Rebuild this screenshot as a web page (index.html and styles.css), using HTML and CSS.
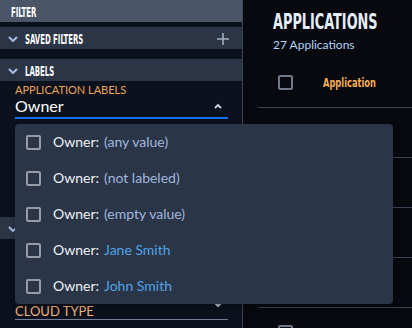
FILE: index.html
```html
<!DOCTYPE html>
<html lang="en">
<head>
  <meta charset="UTF-8" />
  <meta name="viewport" content="width=device-width, initial-scale=1.0" />
  <title>Applications</title>
  <link rel="stylesheet" href="styles.css">
</head>
<body>
  <aside class="sidebar">
    <div class="sidebar-title"><span class="narrow">FILTER</span></div>

    <div class="section section-saved">
      <div class="section-head">
        <svg class="chevron" width="10" height="6" viewBox="0 0 10 6"><path d="M1 1 L5 5 L9 1" /></svg>
        <span class="narrow">SAVED FILTERS</span>
        <svg class="section-add" width="12" height="12" viewBox="0 0 12 12"><path d="M6 0 V12 M0 6 H12" /></svg>
      </div>
    </div>

    <div class="section section-labels">
      <div class="section-head">
        <svg class="chevron" width="10" height="6" viewBox="0 0 10 6"><path d="M1 1 L5 5 L9 1" /></svg>
        <span class="narrow">LABELS</span>
      </div>
      <div class="section-body">
        <div class="field">
          <div class="field-label">APPLICATION LABELS</div>
          <div class="field-input is-open">
            <span>Owner</span>
            <svg class="caret" width="8" height="6" viewBox="0 0 8 6"><path d="M1 5 L4 2 L7 5" /></svg>

            <ul class="menu">
              <li class="menu-item"><span class="checkbox"></span><span class="menu-key">Owner:</span><span class="menu-value">(any value)</span></li>
              <li class="menu-item"><span class="checkbox"></span><span class="menu-key">Owner:</span><span class="menu-value">(not labeled)</span></li>
              <li class="menu-item"><span class="checkbox"></span><span class="menu-key">Owner:</span><span class="menu-value">(empty value)</span></li>
              <li class="menu-item"><span class="checkbox"></span><span class="menu-key">Owner:</span><span class="menu-value is-name">Jane Smith</span></li>
              <li class="menu-item"><span class="checkbox"></span><span class="menu-key">Owner:</span><span class="menu-value is-name">John Smith</span></li>
            </ul>
          </div>
        </div>
      </div>
    </div>

    <div class="section section-attributes">
      <div class="section-head">
        <svg class="chevron" width="10" height="6" viewBox="0 0 10 6"><path d="M1 1 L5 5 L9 1" /></svg>
        <span class="narrow">ATTRIBUTES</span>
      </div>
      <div class="section-body">
        <div class="field">
          <div class="field-input is-placeholder">
            <span>CLOUD TYPE</span>
            <svg class="caret" width="8" height="6" viewBox="0 0 8 6"><path d="M1 1 L4 4 L7 1" /></svg>
          </div>
        </div>
      </div>
    </div>
  </aside>

  <main class="main">
    <div class="page-head">
      <h1><span class="narrow-title">APPLICATIONS</span></h1>
      <div class="page-count">27 Applications</div>
    </div>

    <div class="table">
      <div class="row row-head">
        <span class="checkbox"></span>
        <span class="cell narrow-head">Application</span>
      </div>
      <div class="row"><span class="checkbox"></span><span class="cell">billing</span></div>
      <div class="row"><span class="checkbox"></span><span class="cell">checkout</span></div>
      <div class="row"><span class="checkbox"></span><span class="cell">inventory</span></div>
      <div class="row"><span class="checkbox"></span><span class="cell">search</span></div>
      <div class="row"><span class="checkbox"></span><span class="cell">mlflow</span></div>
    </div>
  </main>
</body>
</html>
```

FILE: styles.css
```css
:root {
  --sidebar-bg: #0b111d;
  --main-bg: #07090e;
  --title-bg: #4a5568;
  --head-bg: #2c3546;
  --menu-bg: #2b3548;
  --line: #3a4253;
  --orange: #eca458;
  --blue: #1a6ff0;
  --narrow: "DejaVu Sans Condensed", "Liberation Sans Narrow", "DejaVu Sans", sans-serif;
}

* { box-sizing: border-box; }

body {
  margin: 0;
  height: 328px;
  display: flex;
  overflow: hidden;
  background: var(--main-bg);
  font-family: Lato, "Noto Sans", sans-serif;
  color: #fff;
}

/* sidebar */
.sidebar {
  width: 243px;
  flex: none;
  background: var(--sidebar-bg);
  border-right: 1px solid #3d4656;
}

.narrow {
  display: inline-block;
  font-family: var(--narrow);
  font-weight: bold;
  font-size: 14px;
  white-space: nowrap;
  transform: scaleX(.55);
  transform-origin: 0 50%;
}

.sidebar-title {
  height: 22px;
  padding: 2px 0 0 11px;
  display: flex;
  align-items: center;
  background: var(--title-bg);
}

.section-head {
  height: 22px;
  padding: 2px 13px 0 8px;
  display: flex;
  align-items: center;
  gap: 7px;
  background: var(--head-bg);
}

.section-saved { margin-top: 5px; }
.section-labels { margin-top: 10px; }
.section-attributes { margin-top: 98px; }

.chevron path {
  fill: none;
  stroke: #a9bde2;
  stroke-width: 2;
}

.section-add {
  margin-left: auto;
}
.section-add path {
  stroke: #a0aec0;
  stroke-width: 1.6;
}

.section-body {
  padding: 2px 14px 0 15px;
}
.section-attributes .section-body {
  padding-top: 52px;
}

.field-label {
  font-size: 11px;
  line-height: 13px;
  color: var(--orange);
}

.field-input {
  position: relative;
  height: 23px;
  padding-bottom: 1px;
  display: flex;
  align-items: center;
  font-size: 16px;
  line-height: 20px;
  border-bottom: 2px solid var(--blue);
}

.field-input.is-placeholder {
  height: 29px;
  padding-bottom: 0;
  font-size: 13px;
  line-height: 16px;
  color: #f3b27a;
  border-bottom: 1px solid #718096;
}
.field-input.is-placeholder span {
  align-self: flex-end;
}

.caret {
  margin-left: auto;
  margin-right: 6px;
}
.caret path {
  fill: none;
  stroke: #cbd5e0;
  stroke-width: 1.8;
}

/* dropdown */
.menu {
  position: absolute;
  top: calc(100% + 7px);
  left: 0;
  z-index: 10;
  width: 378px;
  margin: 0;
  padding: 0;
  list-style: none;
  background: var(--menu-bg);
  border-radius: 4px;
  box-shadow: 0 2px 6px rgba(0,0,0,.35);
}

.menu-item {
  height: 36px;
  padding-left: 11px;
  display: flex;
  align-items: center;
  font-size: 14px;
}

.menu-item .checkbox {
  margin-right: 12px;
  border-color: #959ca8;
}

.menu-key {
  color: #eef2f7;
  margin-right: 5px;
}
.menu-value { color: #a0b5dd; }
.menu-value.is-name { color: #4fa3e6; }

.checkbox {
  width: 15px;
  height: 15px;
  flex: none;
  border: 2px solid #6f7888;
  border-radius: 2px;
}

/* main */
.main {
  flex: 1;
  min-width: 0;
  overflow: hidden;
  padding: 8px 0 0 15px;
}

.page-head {
  padding-left: 15px;
}

.page-head h1 {
  margin: 0;
  font-weight: bold;
  font-size: 22px;
  line-height: 26px;
}

.narrow-title {
  display: inline-block;
  font-family: var(--narrow);
  color: #e6eefc;
  white-space: nowrap;
  transform: scaleX(.65);
  transform-origin: 0 50%;
}

.page-count {
  margin-top: 2px;
  font-size: 12px;
  line-height: 15px;
  color: #b3d4f5;
}

.table {
  margin-top: 6px;
}

.row {
  height: 50px;
  padding-left: 20px;
  display: flex;
  align-items: center;
  border-bottom: 1px solid var(--line);
  font-size: 13px;
  color: #e2e8f0;
}

.cell {
  margin-left: 30px;
}

.narrow-head {
  display: inline-block;
  font-family: var(--narrow);
  font-weight: bold;
  color: #f6ad55;
  white-space: nowrap;
  transform: scaleX(.71);
  transform-origin: 0 50%;
}
```
